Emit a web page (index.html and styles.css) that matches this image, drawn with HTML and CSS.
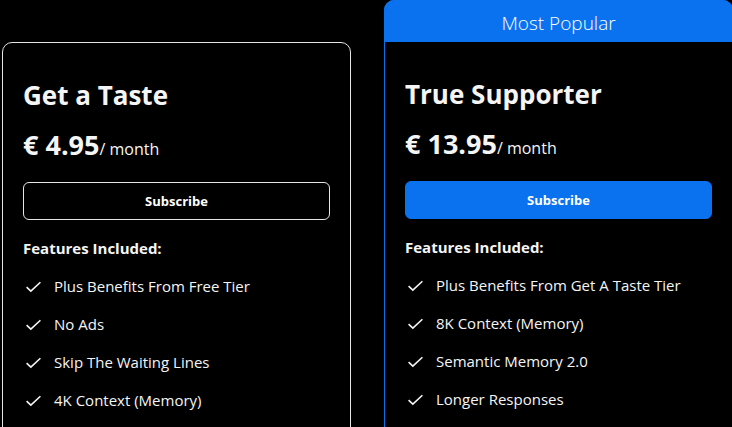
FILE: index.html
```html
<!DOCTYPE html>
<html lang="en">
<head>
    <meta charset="UTF-8">
    <title>Plans</title>
    <link rel="stylesheet" href="styles.css">
</head>
<body>
    <div class="plans">
        <div class="card">
            <div class="card_body">
                <h2 class="plan_name">Get a Taste</h2>
                <p class="price"><b>€ 4.95</b>/ month</p>
                <button class="btn">Subscribe</button>
                <h4 class="features_title">Features Included:</h4>
                <ul class="features">
                    <li><svg viewBox="0 0 16 16"><path d="M1.5 8.6l4 3.7L14.5 4"/></svg>Plus Benefits From Free Tier</li>
                    <li><svg viewBox="0 0 16 16"><path d="M1.5 8.6l4 3.7L14.5 4"/></svg>No Ads</li>
                    <li><svg viewBox="0 0 16 16"><path d="M1.5 8.6l4 3.7L14.5 4"/></svg>Skip The Waiting Lines</li>
                    <li><svg viewBox="0 0 16 16"><path d="M1.5 8.6l4 3.7L14.5 4"/></svg>4K Context (Memory)</li>
                </ul>
            </div>
        </div>
        <div class="card popular">
            <div class="card_header">Most Popular</div>
            <div class="card_body">
                <h2 class="plan_name">True Supporter</h2>
                <p class="price"><b>€ 13.95</b>/ month</p>
                <button class="btn btn_primary">Subscribe</button>
                <h4 class="features_title">Features Included:</h4>
                <ul class="features">
                    <li><svg viewBox="0 0 16 16"><path d="M1.5 8.6l4 3.7L14.5 4"/></svg>Plus Benefits From Get A Taste Tier</li>
                    <li><svg viewBox="0 0 16 16"><path d="M1.5 8.6l4 3.7L14.5 4"/></svg>8K Context (Memory)</li>
                    <li><svg viewBox="0 0 16 16"><path d="M1.5 8.6l4 3.7L14.5 4"/></svg>Semantic Memory 2.0</li>
                    <li><svg viewBox="0 0 16 16"><path d="M1.5 8.6l4 3.7L14.5 4"/></svg>Longer Responses</li>
                </ul>
            </div>
        </div>
    </div>
</body>
</html>
```
FILE: styles.css
```css
body{
    margin: 0;
    background-color: #000;
    color: #f5f5f5;
    font-family: "Open Sans", "Noto Sans", sans-serif;
    overflow: hidden;
}
.plans{
    display: flex;
    gap: 33px;
    padding-left: 2px;
}
.card{
    flex: none;
    width: 349px;
    box-sizing: border-box;
    border: 1px solid #e6e6e6;
    border-radius: 10px;
    margin-top: 42px;
    height: 420px;
}
.card.popular{
    margin-top: 0;
    border-color: #0b72ef;
    height: 462px;
}
.card_header{
    height: 42px;
    margin: -1px -1px 0;
    border-radius: 10px 10px 0 0;
    background-color: #0b72ef;
    color: #fff;
    font-size: 19px;
    font-weight: 300;
    line-height: 46px;
    text-align: center;
}
.card_body{
    padding: 35px 20px 0;
}
.plan_name{
    margin: 0;
    font-size: 26px;
    font-weight: 700;
    line-height: 34px;
}
.price{
    margin: 16px 0 0;
    font-size: 16px;
    line-height: 34px;
}
.price b{
    font-size: 27px;
}
.btn{
    display: block;
    width: 100%;
    height: 38px;
    margin-top: 16px;
    border: 1px solid #e6e6e6;
    border-radius: 6px;
    background-color: #000;
    color: #fff;
    font-family: inherit;
    font-size: 13px;
    font-weight: 700;
}
.btn_primary{
    border-color: #0b72ef;
    background-color: #0b72ef;
}
.features_title{
    margin: 17px 0 0;
    font-size: 15px;
    font-weight: 700;
    line-height: 22px;
}
.features{
    list-style: none;
    margin: 8px 0 0;
    padding: 0;
}
.features li{
    display: flex;
    align-items: center;
    height: 38px;
    font-size: 15px;
}
.features svg{
    width: 17px;
    height: 17px;
    margin: 0 12px 0 2px;
    fill: none;
    stroke: #f5f5f5;
    stroke-width: 1.5;
}
```
